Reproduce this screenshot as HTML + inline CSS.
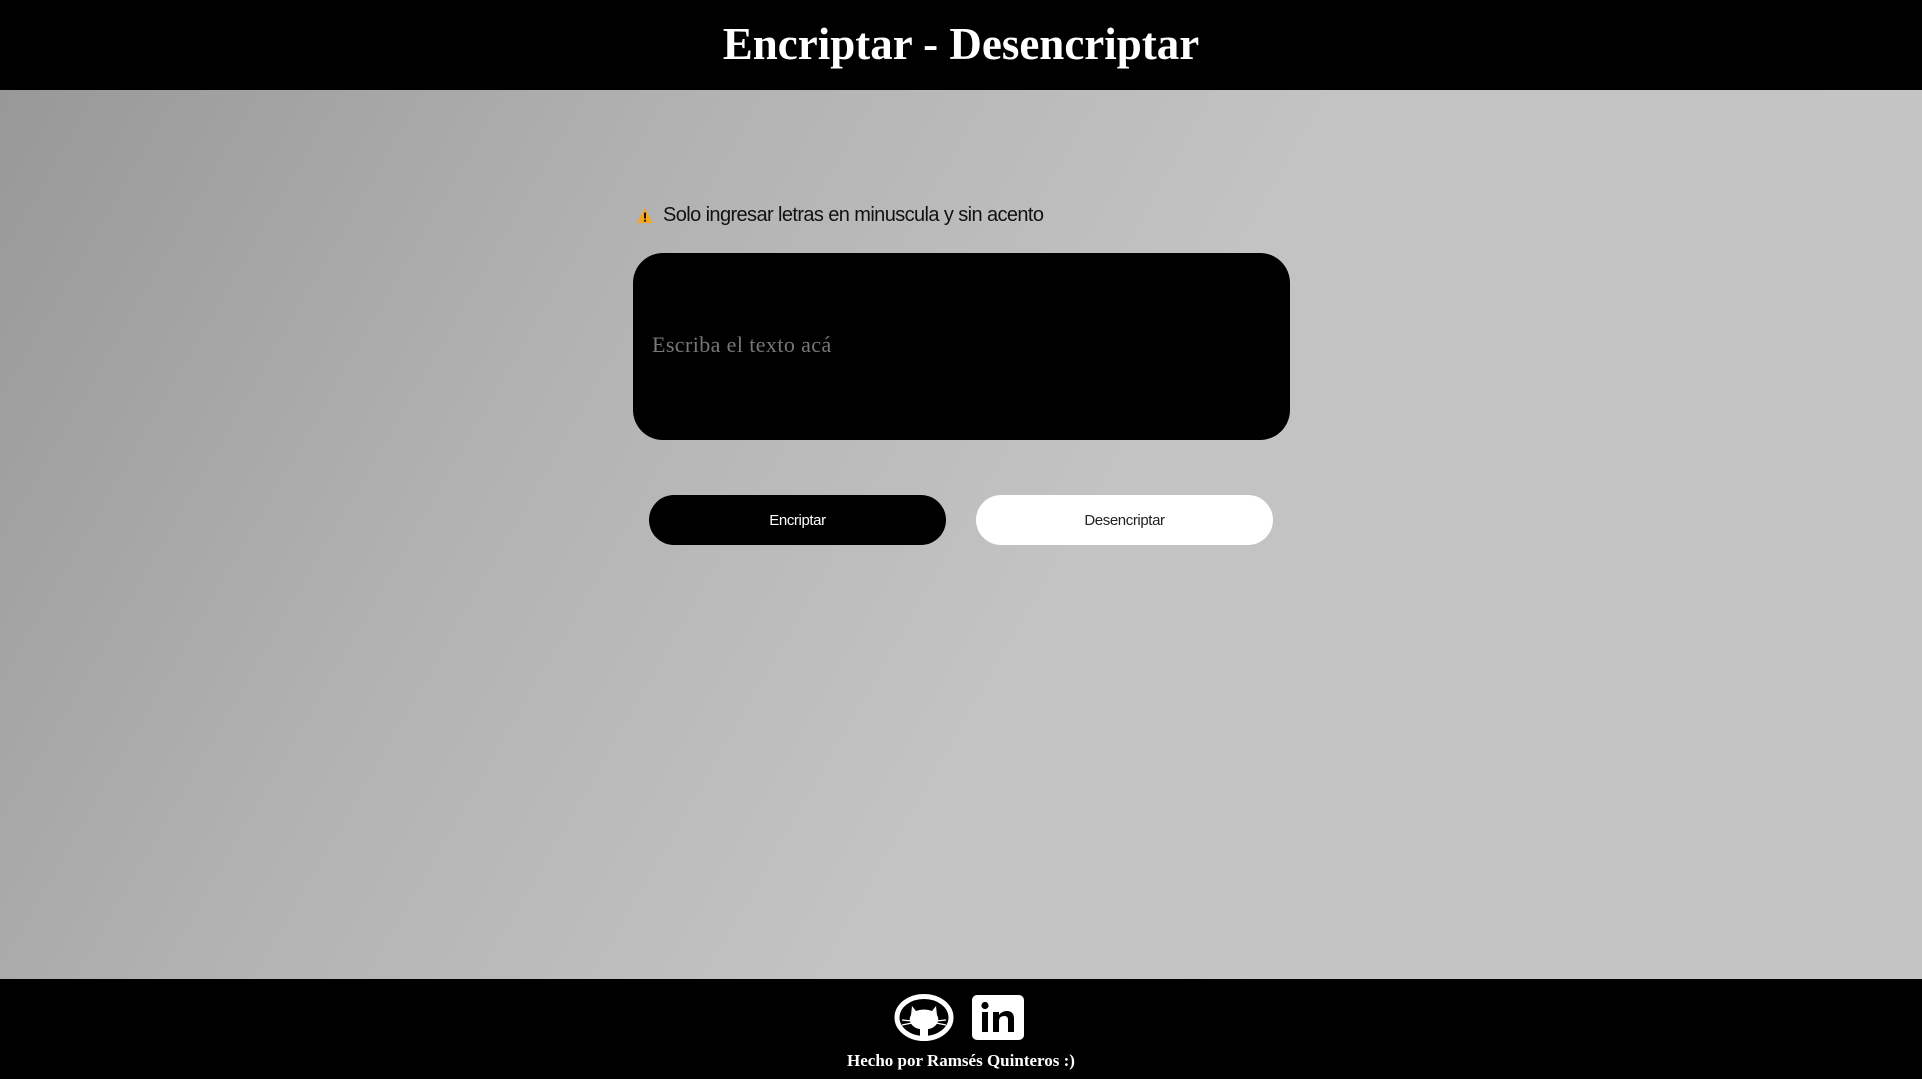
<!DOCTYPE html>
<html><head><meta charset="utf-8"><style>
*{margin:0;padding:0;box-sizing:border-box}
html,body{width:1922px;height:1079px;overflow:hidden}
body{background:linear-gradient(120deg,#979697 0%,#b3b2b3 30%,#c4c3c4 55%,#c5c4c5 100%);position:relative;font-family:"Liberation Sans",sans-serif}
header{position:absolute;left:0;top:0;width:1922px;height:90px;background:#000;color:#fff;text-align:center;font-family:"Liberation Serif",serif;font-weight:bold;font-size:45px;line-height:88px}
.warn{position:absolute;left:636px;top:201px;font-size:20px;color:#111;line-height:28px;letter-spacing:-0.6px}
.warn svg{vertical-align:-3px;margin-right:9px}
.ta{position:absolute;left:633px;top:253px;width:657px;height:187px;background:#000;border-radius:30px}
.ta span{position:absolute;left:19px;top:79px;font-family:"Liberation Serif",serif;font-size:22px;letter-spacing:0.4px;color:#777}
.btn{position:absolute;top:495px;width:297px;height:50px;border-radius:25px;text-align:center;line-height:52px;font-size:15px;letter-spacing:-0.4px}
.b1{left:649px;background:#000;color:#fff}
.b2{left:976px;background:#fff;color:#222}
footer{position:absolute;left:0;top:979px;width:1922px;height:100px;background:#000;color:#fff}
.credit{position:absolute;left:0;width:100%;top:72px;text-align:center;font-family:"Liberation Serif",serif;font-weight:bold;font-size:17px}
</style></head><body>
<header>Encriptar - Desencriptar</header>
<div class="warn"><svg width="18" height="17" viewBox="0 0 18 17"><path d="M9 1 L17 16 L1 16 Z" fill="#f5a623"/><rect x="8.1" y="5.5" width="1.8" height="6" fill="#000"/><rect x="8.1" y="12.8" width="1.8" height="1.8" fill="#000"/></svg>Solo ingresar letras en minuscula y sin acento</div>
<div class="ta"><span>Escriba el texto acá</span></div>
<div class="btn b1">Encriptar</div>
<div class="btn b2">Desencriptar</div>
<footer>
<svg style="position:absolute;left:894px;top:15px" width="60" height="47" viewBox="0 0 60 47">
<ellipse cx="30" cy="23.5" rx="27" ry="21" fill="none" stroke="#fff" stroke-width="5"/>
<path d="M18 12 L22 17 Q30 14 38 17 L42 12 L43 21 Q46 26 42 31 Q38 35 34 35 L34 42 L26 42 L26 35 Q22 35 18 31 Q14 26 17 21 Z" fill="#fff"/>
<path d="M8 26 L18 27 M8 31 L18 29 M52 26 L42 27 M52 31 L42 29" stroke="#fff" stroke-width="1.2"/>
</svg>
<svg style="position:absolute;left:972px;top:16px" width="52" height="45" viewBox="0 0 52 45">
<rect x="0" y="0" width="52" height="45" rx="5" fill="#fff"/>
<rect x="10" y="17" width="6" height="20" fill="#000"/><circle cx="13" cy="10.5" r="3.6" fill="#000"/>
<path d="M21 17 H27 V20 Q30 16 35 16 Q42 16 42 24 V37 H36 V25 Q36 21 32.5 21 Q27 21 27 26 V37 H21 Z" fill="#000"/>
</svg>
<div class="credit">Hecho por Ramsés Quinteros :)</div>
</footer>
</body></html>
